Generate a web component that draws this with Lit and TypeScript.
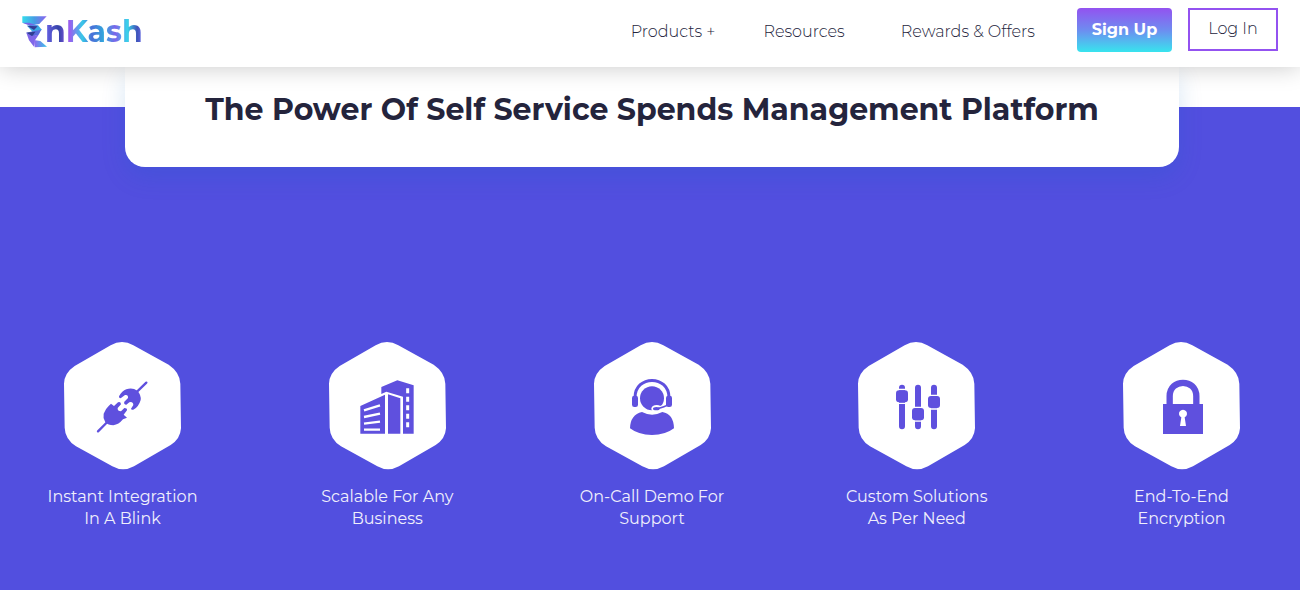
import { LitElement, html, css, svg } from "lit";
import { customElement } from "lit/decorators.js";

const plug = svg`
  <path d="M144 289 L172 261 M262 169 L289 143" fill="none" stroke="currentColor" stroke-width="7" stroke-linecap="round"/>
  <path d="M183 206 L192 213 L204 202 Q212 199 213 208 L203 219 Q202 229 213 229 L223 219 Q232 219 231 226 L221 239 L231 248 L219 253 Q206 269 190 271 Q174 271 166 262 Q158 249 161 236 Q166 222 176 213 Z" fill="currentColor"/>
  <path d="M207 184 Q216 168 229 163 Q247 157 262 167 Q274 180 272 195 Q266 215 252 223 Q246 227 243 221 L250 210 Q249 199 238 202 L229 209 Q220 208 223 200 L234 189 Q235 178 225 180 L213 189 Q206 191 207 184 Z" fill="currentColor"/>`;

const buildings = svg`
  <path d="M136 213 L210 179 V296 H136 Z M219 178 L256 190 V296 H219 Z" fill="currentColor"/>
  <path d="M199 156 L247 136 L296 151 V296 H264 V185 L214 170 L199 177 Z" fill="currentColor"/>
  <path d="M147 226 L195 211 M147 246 L195 236 M147 266 L195 260 M147 284 H195" fill="none" stroke="#fff" stroke-width="7"/>
  <path d="M278 160 V277" fill="none" stroke="#fff" stroke-width="9" stroke-dasharray="15 10.5"/>`;

const agent = svg`
  <circle cx="216" cy="190" r="36" fill="currentColor"/>
  <path d="M165 188 C165 119 267 119 267 188" fill="none" stroke="currentColor" stroke-width="9"/>
  <rect x="156" y="182" width="18" height="34" rx="7" fill="currentColor"/>
  <rect x="258" y="182" width="18" height="34" rx="7" fill="currentColor"/>
  <path d="M254 214 Q246 218 232 221" fill="none" stroke="#fff" stroke-width="13"/>
  <ellipse cx="230" cy="221" rx="16" ry="11" fill="#fff"/>
  <path d="M266 208 Q254 216 232 221" fill="none" stroke="currentColor" stroke-width="5"/>
  <ellipse cx="229" cy="221" rx="10" ry="5" fill="currentColor"/>
  <path d="M186 231 Q216 247 247 231 Q281 237 282 280 Q256 300 216 300 Q174 299 150 280 Q151 239 186 231 Z" fill="currentColor"/>`;

const sliders = svg`
  <path d="M174 158 V274 M222 158 V274 M270 158 V274" fill="none" stroke="currentColor" stroke-width="18" stroke-linecap="round"/>
  <path d="M163 163.500 H185 M163 205 H185 M211 217 H233 M211 258 H233 M259 181 H281 M259 222 H281" fill="none" stroke="#fff" stroke-width="4"/>
  <rect x="156" y="166" width="36" height="36" rx="9" fill="currentColor"/>
  <rect x="204" y="219" width="36" height="37" rx="9" fill="currentColor"/>
  <rect x="252" y="183" width="36" height="36" rx="9" fill="currentColor"/>`;

const padlock = svg`
  <path d="M182 212 V184 C182 130 262 130 262 184 V212" fill="none" stroke="currentColor" stroke-width="19"/>
  <rect x="162" y="207" width="120" height="90" fill="currentColor"/>
  <path d="M217 247 A12 12 0 1 1 227 247 L231 273 H213 Z" fill="#fff"/>`;

const features = [
  { icon: plug, lines: ["Instant Integration", "In A Blink"] },
  { icon: buildings, lines: ["Scalable For Any", "Business"] },
  { icon: agent, lines: ["On-Call Demo For", "Support"] },
  { icon: sliders, lines: ["Custom Solutions", "As Per Need"] },
  { icon: padlock, lines: ["End-To-End", "Encryption"] },
];

@customElement("app-root")
export class AppRoot extends LitElement {
  static styles = css`
    :host {
      display: flex;
      flex-direction: column;
      min-height: 100vh;
      overflow: hidden;
      background: #fff;
      color: #24243c;
      font-family: Montserrat, Inter, "Open Sans", sans-serif;
      font-size: 16px;
    }
    .header {
      position: relative;
      z-index: 2;
      display: flex;
      align-items: flex-start;
      box-sizing: border-box;
      min-height: 67px;
      padding: 8px 22px;
      background: #fff;
      box-shadow: 0 0 25px rgba(0, 0, 0, 0.22);
    }
    .logo {
      display: flex;
      align-items: center;
      height: 48px;
      text-decoration: none;
    }
    .mark {
      display: block;
    }
    .word {
      margin-left: -2px;
      font-size: 30px;
      line-height: 44px;
      font-weight: 700;
      color: transparent;
      background: linear-gradient(90deg, #6a62e8, #3543a8 14%, #9b5cf0 25%, #38c8e8 38%, #4a6fd8 48%, #31a8dc 60%, #7c64ea 72%, #38d3ea 84%, #4053b8 94%, #6b6cf0);
      background-clip: text;
      -webkit-background-clip: text;
    }
    .nav {
      display: flex;
      align-items: center;
      height: 46px;
      margin-left: auto;
      margin-right: 42px;
      gap: 48px;
    }
    .link {
      color: #24243c;
      font-size: 16px;
      font-weight: 300;
      text-decoration: none;
      white-space: nowrap;
    }
    .offers {
      padding-left: 8px;
    }
    .actions {
      display: flex;
      gap: 16px;
    }
    .button {
      box-sizing: border-box;
      padding: 0 0 2px;
      font-family: inherit;
      font-size: 16px;
      cursor: pointer;
    }
    .signup {
      width: 95px;
      height: 44px;
      border: 0;
      border-radius: 4px;
      background: linear-gradient(#9352f0, #6e8cf0 50%, #38e4ee);
      color: #fff;
      font-weight: 700;
    }
    .login {
      width: 90px;
      height: 43px;
      border: 2px solid #9352f0;
      background: #fff;
      color: #24243c;
      font-weight: 300;
    }
    .hero {
      flex: 1;
      display: flex;
      flex-direction: column;
      margin-top: 40px;
      background: #524fdf;
    }
    .card {
      margin: -40px 121px 0 125px;
      padding: 21px 24px 35px;
      border-radius: 0 0 20px 20px;
      background: #fff;
      box-shadow: 0 10px 25px rgba(0, 98, 190, 0.16);
      text-align: center;
    }
    .title {
      margin: 0;
      font-size: 30px;
      line-height: 44px;
      font-weight: 700;
    }
    .features {
      display: flex;
      justify-content: space-between;
      margin: 168px 0 0;
      padding: 0 38px 60px 42px;
      list-style: none;
    }
    .feature {
      display: flex;
      flex-direction: column;
      align-items: center;
      width: 161px;
      color: #f0effc;
      font-size: 16px;
      line-height: 22px;
      text-align: center;
    }
    .badge {
      display: block;
      width: 145px;
      height: 145px;
      margin-bottom: 6px;
      color: #5f50de;
    }
    .line {
      display: block;
      white-space: nowrap;
    }
  `;

  render() {
    return html`
      <header class="header">
        <a class="logo" href="#" aria-label="EnKash">
          <svg class="mark" width="25" height="32" viewBox="0 0 75 96" aria-hidden="true">
            <defs>
              <linearGradient id="top" x1="0" x2="1"><stop offset="0" stop-color="#35dcec"/><stop offset=".5" stop-color="#469ce4"/><stop offset="1" stop-color="#8d62ef"/></linearGradient>
              <linearGradient id="low" x1="0" x2="1"><stop offset="0" stop-color="#8f66ef"/><stop offset="1" stop-color="#35c6e8"/></linearGradient>
            </defs>
            <path d="M1 1 H74 L52 24 L30 28 L1 20 Z" fill="url(#top)"/>
            <path d="M1 20 L22 20 L50 30 L30 34 L20 28 Z" fill="#7567e8"/>
            <path d="M15 29 L48 28 L60 42 L32 48 Z" fill="#3ba8e4"/>
            <path d="M15 29 L47 31 L36 42 Z" fill="#343c96"/>
            <path d="M13 50 L32 46 L58 41 L50 56 L24 64 Z" fill="#566bdc"/>
            <path d="M13 50 L40 47 L31 61 Z" fill="#303b91"/>
            <path d="M13 50 L28 60 L50 56 L39 73 L36 92 L21 73 Z" fill="#8066e9"/>
            <path d="M36 72 L55 75 L75 92 L38 94 Z" fill="url(#low)"/>
          </svg>
          <span class="word">nKash</span>
        </a>
        <nav class="nav">
          <a class="link" href="#">Products +</a>
          <a class="link" href="#">Resources</a>
          <a class="link offers" href="#">Rewards &amp; Offers</a>
        </nav>
        <div class="actions">
          <button class="button signup" type="button">Sign Up</button>
          <button class="button login" type="button">Log In</button>
        </div>
      </header>
      <main class="hero">
        <div class="card">
          <h1 class="title">The Power Of Self Service Spends Management Platform</h1>
        </div>
        <ul class="features">
          ${features.map(
            (f) => html`<li class="feature">
              <svg class="badge" viewBox="0 0 435 435" aria-hidden="true">
                <path d="M182 31 Q216 11 250 31 L356 89 Q390 112 391 146 L393 280 Q391 312 362 330 L252 394 Q219 412 187 394 L78 334 Q45 312 44 278 L42 146 Q43 114 74 93 Z" fill="#fff"/>
                ${f.icon}
              </svg>
              ${f.lines.map((l) => html`<span class="line">${l}</span>`)}
            </li>`
          )}
        </ul>
      </main>
    `;
  }
}
